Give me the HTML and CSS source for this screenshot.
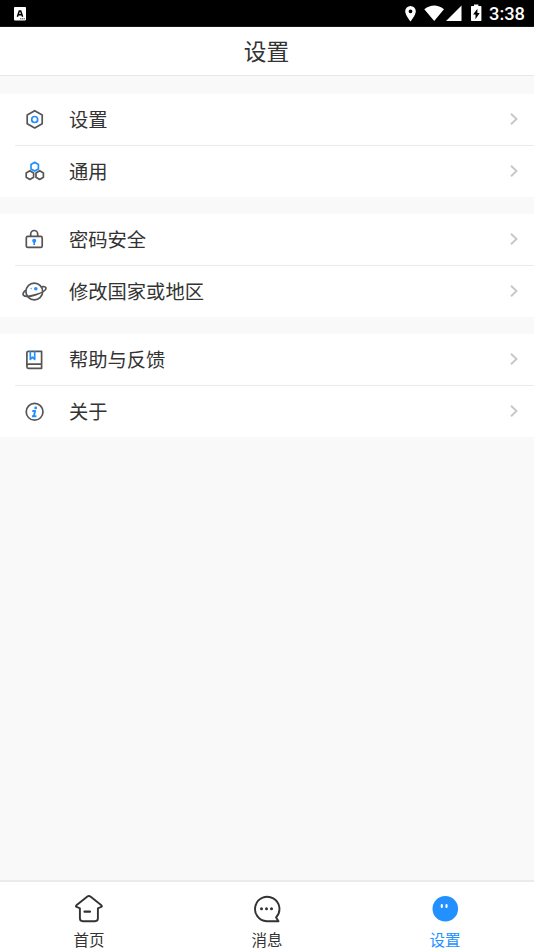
FILE: index.html
```html
<!DOCTYPE html>
<html lang="zh-CN">
<head>
<meta charset="utf-8">
<title>设置</title>
<link rel="stylesheet" href="styles.css">
</head>
<body>
<div class="status">
  <svg class="notice" width="12" height="14" viewBox="0 0 12 14"><rect width="12" height="13.4" rx=".8" fill="#fff"/><path d="M3.4 9.7 5.3 4h1.4l1.9 5.7M4.2 7.8h3.6" fill="none" stroke="#000" stroke-width="1.5"/><path d="M6 11.8h5" stroke="#333" stroke-width=".9" stroke-dasharray="1.3 .5"/></svg>
  <svg class="signals" width="78" height="20" viewBox="404 3 78 20" fill="#fff"><path fill-rule="evenodd" d="M410.5 6a5.3 5.3 0 0 0-5.3 5.3c0 4 5.3 10.2 5.3 10.2s5.300-6.200 5.300-10.200a5.300 5.300 0 0 0-5.300-5.300m0 3.400a1.900 1.900 0 1 1 0 3.800 1.900 1.900 0 0 1 0-3.800"/><path d="M424.300 9.200Q434.200 1.700 444 9.200L434.200 21ZM446 21 461.500 5.500V21Z"/><path fill-rule="evenodd" d="M474 4.500h4.400V6h2.300q.7 0 .7.7v13.600q0 .7-.7.7h-9q-.7 0-.7-.7V6.700q0-.7.7-.7h2.300zm3.400 4.200-4.300 5.900h2.400v4.700l4.200-6.300h-2.300z"/></svg>
  <span class="clock">3:38</span>
</div>
<header class="header">设置</header>
<main class="content">
  <section class="group">
    <div class="row">
      <svg class="icon" viewBox="20 105 30 28"><path class="line" d="M34.700 110.700 42.200 114.900V123.700L34.700 128 27.200 123.700V114.900Z"/><circle class="accent" cx="34.700" cy="119.500" r="3"/></svg>
      <span class="label">设置</span><svg class="chevron" viewBox="0 0 10 14"><path d="m2 1.700 5.500 5.300L2 12.300"/></svg>
    </div>
    <div class="row">
      <svg class="icon" viewBox="20 157 30 28"><path class="accent" d="m34.700 162.300 3.700 2.200v4.400l-3.700 2.200-3.700-2.200v-4.400Z"/><path class="line" d="m29.900 170.700 3.700 2.200v4.400l-3.700 2.200-3.700-2.200v-4.400ZM39.700 170.700l3.700 2.200v4.400l-3.700 2.200-3.700-2.200v-4.400Z"/></svg>
      <span class="label">通用</span><svg class="chevron" viewBox="0 0 10 14"><path d="m2 1.700 5.500 5.300L2 12.300"/></svg>
    </div>
  </section>
  <section class="group">
    <div class="row">
      <svg class="icon" viewBox="20 225 30 28"><rect class="line" x="26.300" y="236.400" width="15.900" height="11" rx="1.500"/><path class="line" d="M30.700 236v-2a3.500 3.500 0 0 1 7 0v2"/><circle class="dot" cx="34.200" cy="240.700" r="2"/><path class="accent" d="M34.200 241v4"/></svg>
      <span class="label">密码安全</span><svg class="chevron" viewBox="0 0 10 14"><path d="m2 1.700 5.500 5.300L2 12.300"/></svg>
    </div>
    <div class="row">
      <svg class="icon" viewBox="20 277 30 28"><circle class="line" cx="34.300" cy="291.500" r="8.400"/><path class="line" d="M26 290.300c-2.500 1.500-3.600 3.500-2.600 4.900 1.200 1.700 7 1.300 12.700-.6 5.500-1.800 10-4.300 9.900-6.500-.1-1.500-2.200-1.800-4.600-1.200"/><circle class="dot" cx="35.800" cy="288.700" r="1.800"/><circle class="dot faint" cx="31.200" cy="288.600" r=".8"/></svg>
      <span class="label">修改国家或地区</span><svg class="chevron" viewBox="0 0 10 14"><path d="m2 1.700 5.500 5.300L2 12.300"/></svg>
    </div>
  </section>
  <section class="group">
    <div class="row">
      <svg class="icon" viewBox="20 345 30 28"><path class="line" d="M28.500 351.300h13.100v17H28.400a1.500 1.500 0 0 1-1.500-1.500V352.800a1.500 1.500 0 0 1 1.600-1.500ZM27 366v-.4a1.500 1.500 0 0 1 1.500-1.500h13"/><path class="accent" d="M30.300 351.300v8l2.200-2.200 2.200 2.200v-8"/></svg>
      <span class="label">帮助与反馈</span><svg class="chevron" viewBox="0 0 10 14"><path d="m2 1.700 5.500 5.300L2 12.300"/></svg>
    </div>
    <div class="row">
      <svg class="icon" viewBox="20 397 30 28"><circle class="line" cx="34.600" cy="411.800" r="8.400"/><circle class="dot" cx="35.700" cy="407.900" r="1.400"/><path class="accent info" d="M32.300 411h2.800l-1.300 5.300h2.600M31.900 416.300h2"/></svg>
      <span class="label">关于</span><svg class="chevron" viewBox="0 0 10 14"><path d="m2 1.700 5.500 5.300L2 12.300"/></svg>
    </div>
  </section>
</main>
<nav class="tabs">
  <div class="tab">
    <svg class="tab-icon" viewBox="73 893 32 32"><path d="M79.900 908.300 77 907q-1.800-.5-.6-1.700l11-8.700q1.500-1.200 3 0l11 8.700q1.200 1.200-.6 1.700l-2.900 1.300v10q0 2.900-2.900 2.900H82.800q-2.900 0-2.900-2.900Z"/><path class="dash" d="M84.500 911.700h5.500"/></svg>
    <span>首页</span>
  </div>
  <div class="tab">
    <svg class="tab-icon" viewBox="251.500 893 32 32"><path d="M276.600 917.400a12.200 12.200 0 1 0-9.400 3.800H279Z"/><path class="dots" d="M262 908.800h.01M267 908.800h.01M272 908.800h.01"/></svg>
    <span>消息</span>
  </div>
  <div class="tab active">
    <svg class="tab-icon" viewBox="429 893 32 32"><circle cx="445.300" cy="908.800" r="12.800" fill="#2290ff"/><path class="eyes" d="M441.800 905v2M446.500 905v2"/></svg>
    <span>设置</span>
  </div>
</nav>
</body>
</html>
```
FILE: styles.css
```css
* { box-sizing: border-box; }
body {
  margin: 0;
  height: 950px;
  display: flex;
  flex-direction: column;
  overflow: hidden;
  background: #f9f9f9;
  color: #333;
  font-family: "Noto Sans CJK SC", sans-serif;
}
svg { display: block; flex: none; }
.status {
  height: 27px;
  flex: none;
  display: flex;
  background: #000;
  border-bottom: 1px solid #161616;
  color: #fff;
}
.notice { margin: 6.5px 0 0 14px; }
.signals { margin: 3px 0 0 auto; }
.clock {
  width: 52px;
  padding-left: 7px;
  font: 500 18.3px/28px Roboto, sans-serif;
}
.header {
  height: 49px;
  flex: none;
  background: #fff;
  border-bottom: 1px solid #e8e8e8;
  font-size: 22.7px;
  line-height: 48px;
  text-align: center;
  padding-right: 1px;
}
.content {
  flex: 1;
  padding-top: 18px;
  display: flex;
  flex-direction: column;
  gap: 17px;
}
.group { background: #fff; }
.row {
  height: 51px;
  display: flex;
  align-items: center;
  padding: 0 15px 1px 20px;
}
.row + .row {
  height: 52px;
  padding-bottom: 0;
  background: linear-gradient(#ebebeb, #ebebeb) 15px 0 / 100% 1px no-repeat;
}
.icon { width: 30px; height: 28px; }
.line, .accent { fill: none; stroke: #555; stroke-width: 1.7; stroke-linejoin: round; }
.accent { stroke: #2290ff; }
.info { stroke-width: 1.9; }
.dot { fill: #2290ff; }
.faint { opacity: .7; }
.label {
  flex: 1;
  margin-left: 19px;
  font-size: 19.3px;
  line-height: 50px;
}
.row:first-child .label { line-height: 48px; }
.chevron {
  width: 10px;
  height: 14px;
  fill: none;
  stroke: #c7c7c7;
  stroke-width: 1.9;
}
.tabs {
  height: 70px;
  flex: none;
  display: flex;
  background: #fff;
  border-top: 2px solid #ebebeb;
}
.tab {
  flex: 1;
  display: flex;
  flex-direction: column;
  align-items: center;
  padding-top: 11px;
  font-size: 15.5px;
  line-height: 28px;
}
.active { color: #2290ff; }
.tab-icon {
  width: 32px;
  height: 32px;
  fill: none;
  stroke: #333;
  stroke-width: 1.9;
  stroke-linecap: round;
  stroke-linejoin: round;
}
.active circle { stroke: none; }
.dash { stroke-width: 2.2; }
.dots { stroke-width: 3; }
.eyes { stroke: #fff; stroke-width: 2.1; }
```
